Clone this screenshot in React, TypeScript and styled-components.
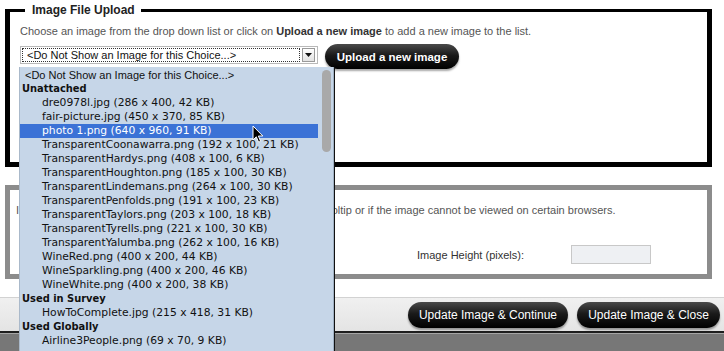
import React from 'react';
import styled, { createGlobalStyle } from 'styled-components';

const GlobalStyle = createGlobalStyle`
  html, body {
    margin: 0;
    padding: 0;
    overflow: hidden;
    background: #fff;
  }
`;

const Screen = styled.div`
  position: relative;
  width: 724px;
  height: 351px;
  overflow: hidden;
  display: flex;
  flex-direction: column;
  font-family: "Liberation Sans", Arial, sans-serif;
  color: #333;
`;

const Content = styled.div`
  padding: 3px 12px 0 5px;
  display: flex;
  flex-direction: column;
`;

const Fieldset = styled.fieldset<{ $tone: string; $top: number; $pad: number }>`
  margin: 0;
  padding: 0 10px 0 ${(p) => p.$pad}px;
  min-width: 0;
  border: 5px solid ${(p) => p.$tone};
  border-top-width: ${(p) => p.$top}px;
  background: #fff;
`;

const Legend = styled.legend`
  margin-left: 5px;
  padding: 0 6px 0 7px;
  font-size: 12px;
  font-weight: bold;
  color: #222;
  line-height: 14px;
`;

const Hint = styled.p`
  margin: 0;
  font-size: 11px;
  line-height: 14px;
  color: #555;
  white-space: nowrap;
  b {
    color: #333;
  }
`;

const TopBody = styled.div`
  height: 145px;
  padding-top: 7px;
  box-sizing: border-box;
`;

const PickerRow = styled.div`
  display: flex;
  align-items: flex-start;
  gap: 7px;
  margin-top: 6px;
`;

const SelectWrap = styled.div`
  position: relative;
  margin-top: 2px;
`;

const SelectBox = styled.div`
  width: 298px;
  height: 18px;
  box-sizing: border-box;
  border: 1px solid #b9b9b9;
  background: #fff;
  display: flex;
  align-items: center;
  padding: 1px 0 1px 1px;
`;

const SelectValue = styled.div`
  flex: 1;
  height: 14px;
  box-sizing: border-box;
  border: 1px dotted #333;
  font-size: 11px;
  line-height: 12px;
  padding-left: 4px;
  color: #111;
`;

const SelectArrow = styled.div`
  width: 13px;
  height: 14px;
  box-sizing: border-box;
  margin: 0 2px;
  border: 1px solid #9a9a9a;
  background: linear-gradient(#fff, #e2e2e2);
  display: flex;
  align-items: center;
  justify-content: center;
`;

const PillButton = styled.button<{ $bold?: boolean; $w: number; $h: number }>`
  width: ${(p) => p.$w}px;
  height: ${(p) => p.$h}px;
  border: none;
  border-radius: 13px;
  background: linear-gradient(#4a4a4a 0%, #1a1a1a 45%, #000 100%);
  color: #fff;
  font-family: "Liberation Sans", Arial, sans-serif;
  font-size: ${(p) => (p.$bold ? '11.5px' : '12px')};
  font-weight: ${(p) => (p.$bold ? 'bold' : 'normal')};
  box-shadow: 0 2px 2px rgba(0, 0, 0, 0.35);
  padding: 0;
  cursor: pointer;
`;

const Menu = styled.div`
  position: absolute;
  top: 21px;
  left: 0;
  width: 313px;
  height: 284px;
  background: #c6d6e8;
  box-shadow: 1px 0 0 #9fb0c2, 2px 0 0 #111, -1px 0 0 #aab9ca;
  z-index: 10;
  display: flex;
  overflow: hidden;
`;

const MenuList = styled.div`
  flex: 1;
  padding-top: 1px;
`;

const MenuItem = styled.div<{ $kind: 'plain' | 'group' | 'item'; $active?: boolean }>`
  height: 14px;
  line-height: 14px;
  white-space: nowrap;
  font-family: ${(p) =>
    p.$kind === 'plain'
      ? '"Liberation Sans", Arial, sans-serif'
      : p.$kind === 'group'
        ? '"DejaVu Sans Condensed", "DejaVu Sans", sans-serif'
        : '"DejaVu Sans", sans-serif'};
  font-size: ${(p) => (p.$kind === 'item' ? '10.75px' : '11px')};
  font-weight: ${(p) => (p.$kind === 'group' ? 'bold' : 'normal')};
  padding-left: ${(p) => (p.$kind === 'item' ? '22px' : p.$kind === 'plain' ? '5px' : '2px')};
  color: ${(p) => (p.$active ? '#fff' : '#111')};
  background: ${(p) => (p.$active ? '#3b72d6' : 'transparent')};
`;

const ScrollTrack = styled.div`
  width: 15px;
  padding: 3px 2px 0 4px;
  box-sizing: border-box;
`;

const ScrollThumb = styled.div`
  height: 82px;
  border-radius: 5px;
  background: #a9a9a9;
`;

const Cursor = styled.svg`
  position: absolute;
  left: 232px;
  top: 79px;
  z-index: 11;
`;

const SecondBody = styled.div`
  height: 84px;
  padding: 13px 0 0 1px;
  box-sizing: border-box;
`;

const SizeRow = styled.div`
  display: grid;
  grid-template-columns: 154px 247px 154px 80px;
  align-items: center;
  margin-top: 28px;
`;

const FieldLabel = styled.span<{ $indent?: number }>`
  font-size: 11px;
  color: #333;
  padding-left: ${(p) => p.$indent ?? 0}px;
`;

const SizeInput = styled.div`
  width: 78px;
  height: 17px;
  border: 1px solid #c8c8c8;
  background: #eef0f3;
`;

const Gap = styled.div<{ $h: number }>`
  height: ${(p) => p.$h}px;
`;

const ActionBar = styled.div`
  height: 33px;
  border-top: 1px solid #d2d2d2;
  border-bottom: 2px solid #1e1e1e;
  background: linear-gradient(#f0f0f0, #e4e4e4);
  display: flex;
  align-items: center;
  justify-content: flex-end;
  gap: 9px;
  padding-right: 4px;
`;

const Footer = styled.div`
  flex: 1;
  border-top: 1px solid #a5a5a5;
  background: #777;
`;

type Row = { text: string; kind: 'plain' | 'group' | 'item'; active?: boolean };

const rows: Row[] = [
  { text: '<Do Not Show an Image for this Choice...>', kind: 'plain' },
  { text: 'Unattached', kind: 'group' },
  { text: 'dre0978l.jpg (286 x 400, 42 KB)', kind: 'item' },
  { text: 'fair-picture.jpg (450 x 370, 85 KB)', kind: 'item' },
  { text: 'photo 1.png (640 x 960, 91 KB)', kind: 'item', active: true },
  { text: 'TransparentCoonawarra.png (192 x 100, 21 KB)', kind: 'item' },
  { text: 'TransparentHardys.png (408 x 100, 6 KB)', kind: 'item' },
  { text: 'TransparentHoughton.png (185 x 100, 30 KB)', kind: 'item' },
  { text: 'TransparentLindemans.png (264 x 100, 30 KB)', kind: 'item' },
  { text: 'TransparentPenfolds.png (191 x 100, 23 KB)', kind: 'item' },
  { text: 'TransparentTaylors.png (203 x 100, 18 KB)', kind: 'item' },
  { text: 'TransparentTyrells.png (221 x 100, 30 KB)', kind: 'item' },
  { text: 'TransparentYalumba.png (262 x 100, 16 KB)', kind: 'item' },
  { text: 'WineRed.png (400 x 200, 44 KB)', kind: 'item' },
  { text: 'WineSparkling.png (400 x 200, 46 KB)', kind: 'item' },
  { text: 'WineWhite.png (400 x 200, 38 KB)', kind: 'item' },
  { text: 'Used in Survey', kind: 'group' },
  { text: 'HowToComplete.jpg (215 x 418, 31 KB)', kind: 'item' },
  { text: 'Used Globally', kind: 'group' },
  { text: 'Airline3People.png (69 x 70, 9 KB)', kind: 'item' },
];

const App = (): JSX.Element => {
  return (
    <>
      <GlobalStyle />
      <Screen>
        <Content>
          <Fieldset $tone="#000" $top={3} $pad={10}>
            <Legend>Image File Upload</Legend>
            <TopBody>
              <Hint>
                Choose an image from the drop down list or click on <b>Upload a new image</b> to add a new
                image to the list.
              </Hint>
              <PickerRow>
                <SelectWrap>
                  <SelectBox>
                    <SelectValue>&lt;Do Not Show an Image for this Choice...&gt;</SelectValue>
                    <SelectArrow>
                      <svg width="7" height="4" viewBox="0 0 7 4">
                        <path d="M0 0 H7 L3.5 4 Z" fill="#111" />
                      </svg>
                    </SelectArrow>
                  </SelectBox>
                  <Menu>
                    <MenuList>
                      {rows.map((r) => (
                        <MenuItem key={r.text} $kind={r.kind} $active={r.active}>
                          {r.text}
                        </MenuItem>
                      ))}
                    </MenuList>
                    <ScrollTrack>
                      <ScrollThumb />
                    </ScrollTrack>
                  </Menu>
                  <Cursor width="12" height="19" viewBox="0 0 12 19">
                    <path
                      d="M1 1 L1 15 L4.3 11.8 L6.6 17.2 L8.6 16.3 L6.4 11 L10.8 11 Z"
                      fill="#000"
                      stroke="#fff"
                      strokeWidth="1"
                      strokeLinejoin="round"
                    />
                  </Cursor>
                </SelectWrap>
                <PillButton $bold $w={134} $h={25}>
                  Upload a new image
                </PillButton>
              </PickerRow>
            </TopBody>
          </Fieldset>
          <Gap $h={18} />
          <Fieldset $tone="#8c8c8c" $top={5} $pad={5}>
            <SecondBody>
              <Hint>
                Image description text will be displayed as the image's rollover tooltip or if the image
                cannot be viewed on certain browsers.
              </Hint>
              <SizeRow>
                <FieldLabel $indent={48}>Image Width (pixels):</FieldLabel>
                <SizeInput />
                <FieldLabel>Image Height (pixels):</FieldLabel>
                <SizeInput />
              </SizeRow>
            </SecondBody>
          </Fieldset>
          <Gap $h={18} />
        </Content>
        <ActionBar>
          <PillButton $w={160} $h={26}>
            Update Image &amp; Continue
          </PillButton>
          <PillButton $w={143} $h={26}>
            Update Image &amp; Close
          </PillButton>
        </ActionBar>
        <Footer />
      </Screen>
    </>
  );
};

export default App;
